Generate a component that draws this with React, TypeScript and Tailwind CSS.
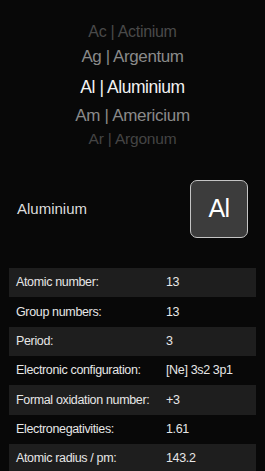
import React from "react";

const rows: [string, string][] = [
  ["Atomic number:", "13"],
  ["Group numbers:", "13"],
  ["Period:", "3"],
  ["Electronic configuration:", "[Ne] 3s2 3p1"],
  ["Formal oxidation number:", "+3"],
  ["Electronegativities:", "1.61"],
  ["Atomic radius / pm:", "143.2"],
];

export default function App() {
  return (
    <div
      className="w-[265px] h-[471px] overflow-hidden bg-[#080808] text-white"
      style={{ fontFamily: '"Liberation Sans", Arial, sans-serif' }}
    >
      <div className="flex flex-col items-center pt-[20px]">
        <div className="h-[24px] flex items-center text-[16px] tracking-[-0.3px] text-[#4a4a4a]">Ac | Actinium</div>
        <div className="h-[24px] mt-[1px] flex items-center text-[17px] tracking-[-0.4px] text-[#8a8a8a]">Ag | Argentum</div>
        <div className="h-[36px] flex items-center text-[17.5px] tracking-[-0.45px] text-[#f2f2f2]">Al | Aluminium</div>
        <div className="h-[22px] flex items-center text-[17px] tracking-[-0.3px] text-[#8a8a8a]">Am | Americium</div>
        <div className="h-[24px] flex items-center text-[15.5px] tracking-[-0.2px] text-[#444444]">Ar | Argonum</div>
      </div>

      <div className="flex items-center justify-between mt-[29px] pl-[17px] pr-[17px]">
        <div className="text-[15px] text-[#dddddd]">Aluminium</div>
        <div className="w-[58px] h-[58px] rounded-[7px] border-[1.5px] border-[#c4c4c4] bg-[#3c3c3c] flex items-center justify-center text-[25px] tracking-[-0.5px] text-white">
          Al
        </div>
      </div>

      <div className="mt-[30px] mx-[9px] flex flex-col">
        {rows.map(([label, value], i) => (
          <div
            key={label}
            className={
              "h-[29.33px] flex items-center text-[12.5px] tracking-[-0.35px] text-[#e6e6e6] pl-[7px] " +
              (i % 2 === 0 ? "bg-[#1e1e1e]" : "")
            }
          >
            <div className="w-[150px]">{label}</div>
            <div>{value}</div>
          </div>
        ))}
      </div>
    </div>
  );
}
